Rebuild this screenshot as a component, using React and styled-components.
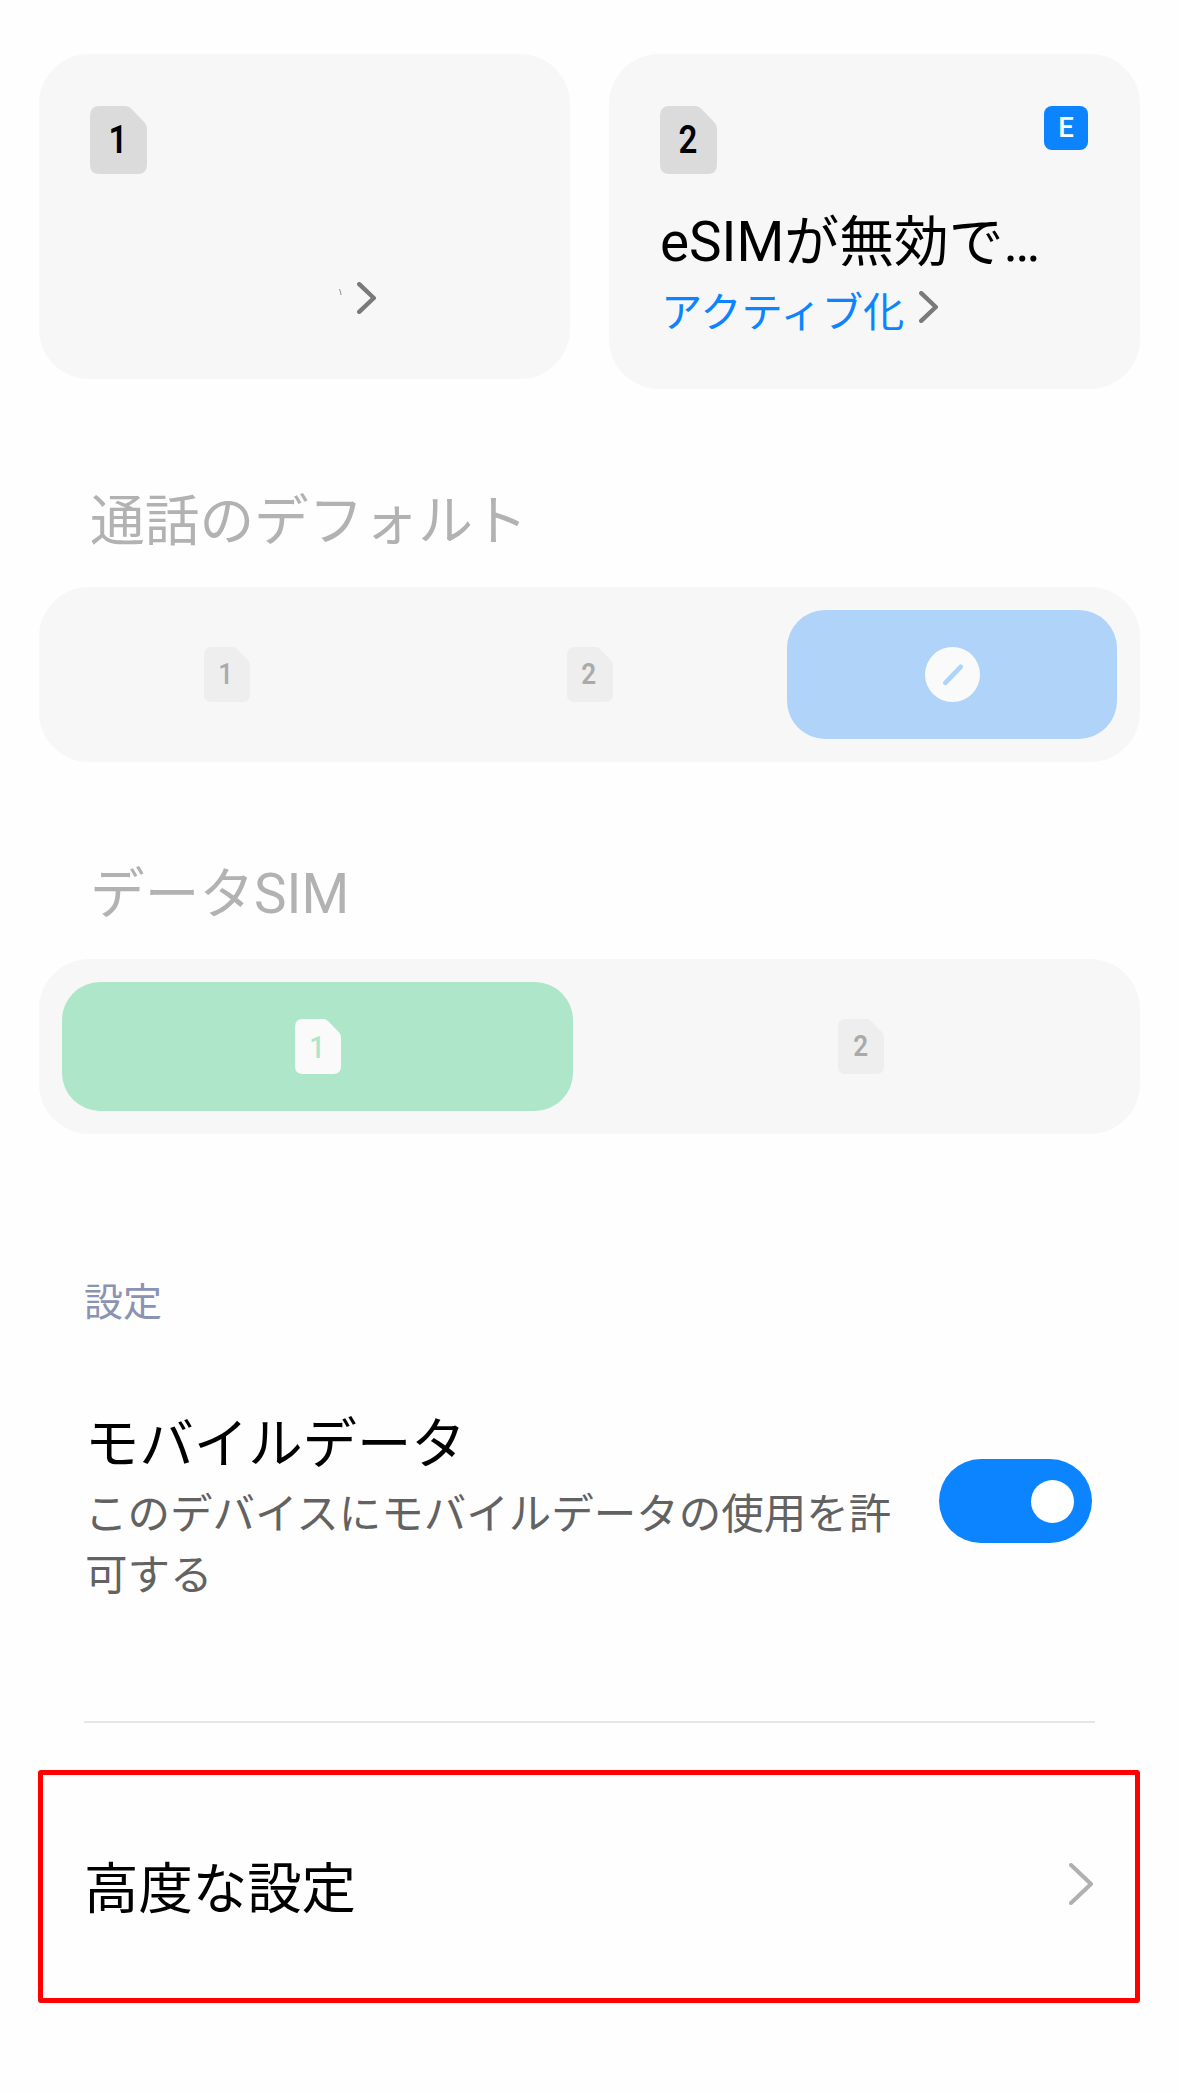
import React from "react";
import styled, { createGlobalStyle } from "styled-components";

const GlobalStyle = createGlobalStyle`
  * { box-sizing: border-box; }
  body {
    margin: 0;
    background: #fefefe;
    color: #000;
    font-family: Roboto, "Noto Sans CJK JP", sans-serif;
  }
`;

const Page = styled.main`
  display: flex;
  flex-direction: column;
  width: 1179px;
  height: 2093px;
  padding: 54px 39px 0;
  overflow: hidden;
`;

const Cards = styled.div`
  display: grid;
  grid-template-columns: 531px 531px;
  gap: 39px;
  align-items: start;
  height: 336px;
`;

const Card = styled.section`
  display: flex;
  flex-direction: column;
  height: ${(p) => p.$height}px;
  padding: 52px 51px 0;
  border-radius: 50px;
  background: #f7f7f7;
`;

const CardTop = styled.div`
  display: flex;
  justify-content: space-between;
  align-items: flex-start;
  height: 68px;
`;

const SimBox = styled.span`
  display: grid;
  width: ${(p) => p.$w}px;
  height: ${(p) => p.$h}px;

  & > * { grid-area: 1 / 1; }
`;

const SimDigit = styled.span`
  place-self: center;
  padding-right: 2px;
  padding-bottom: ${(p) => p.$lift}px;
  color: ${(p) => p.$color};
  font-size: ${(p) => p.$size}px;
  font-weight: ${(p) => p.$weight};
  line-height: 1;
  transform: scaleX(0.87);
`;

const Badge = styled.span`
  display: flex;
  align-items: center;
  justify-content: center;
  width: 44px;
  height: 44px;
  margin-right: 1px;
  border-radius: 8px;
  background: #0d84ff;
  color: #fff;
  font-size: 27.5px;
  font-weight: 500;
  line-height: 44px;
`;

const CardTitle = styled.div`
  margin-top: 36px;
  font-size: 54.8px;
  line-height: 64px;
  white-space: nowrap;
`;

const CardLink = styled.div`
  display: flex;
  align-items: center;
  gap: 15px;
  height: 50px;
  margin-top: 14px;
  padding-left: 1px;
  color: #0d84ff;
  font-size: 41.3px;
  line-height: 50px;

  svg { margin-bottom: 12px; }
`;

const HiddenCarrier = styled.div`
  display: flex;
  align-items: center;
  gap: 15px;
  margin: 108px 0 0 248px;
`;

const GroupTitle = styled.h2`
  height: 64px;
  margin: ${(p) => p.$top}px 0 0 51px;
  color: #b2b2b2;
  font-size: 54.7px;
  font-weight: 400;
  line-height: 64px;
`;

const Segments = styled.div`
  display: grid;
  grid-template-columns: repeat(${(p) => p.$count}, 1fr);
  gap: 32.5px;
  height: 175px;
  margin-top: ${(p) => p.$top}px;
  padding: 23px;
  border-radius: 50px;
  background: #f7f7f7;
`;

const Segment = styled.div`
  display: flex;
  align-items: center;
  justify-content: center;
  border-radius: 38px;
  background: ${(p) => p.$fill || "transparent"};
`;

const Caption = styled.h3`
  margin: 145px 0 0 45px;
  color: #8b93b3;
  font-size: 39px;
  font-weight: 400;
  line-height: 48px;
`;

const Row = styled.div`
  display: flex;
  align-items: center;
  justify-content: space-between;
  height: 220px;
  margin: 86px 48px 0 46px;
`;

const RowText = styled.div`
  display: flex;
  flex-direction: column;
  width: 812px;
  height: 220px;
`;

const RowTitle = styled.div`
  font-size: 54.4px;
  line-height: 64px;
  white-space: nowrap;
`;

const RowNote = styled.div`
  margin-top: 7px;
  color: #626262;
  font-size: 42.5px;
  line-height: 61px;
  word-break: break-all;
`;

const Toggle = styled.span`
  display: flex;
  flex: none;
  align-items: center;
  justify-content: flex-end;
  width: 153px;
  height: 84px;
  margin-bottom: 44px;
  padding-right: 18px;
  border-radius: 42px;
  background: #0c84ff;
`;

const Knob = styled.span`
  width: 43px;
  height: 43px;
  border-radius: 50%;
  background: #fff;
`;

const Divider = styled.hr`
  flex: none;
  width: 1011px;
  height: 2px;
  margin: 88px 0 0 45px;
  border: 0;
  background: #e6e6e6;
`;

const AdvancedRow = styled.div`
  display: flex;
  align-items: center;
  justify-content: space-between;
  width: 1102px;
  height: 233px;
  margin: 47px 0 0 -1px;
  padding: 0 42px 6px 41px;
  border: 5px solid #f00;
  border-radius: 3px;

  ${RowTitle} { padding-top: 13px; }
`;

function Sim({ n, w = 46, h = 55, fill, color, size = 30, weight = 500, lift = 0 }) {
  return (
    <SimBox $w={w} $h={h}>
      <svg width={w} height={h} viewBox="0 0 57 68" preserveAspectRatio="none">
        <path
          fill={fill}
          d="M9.500 0H35q4 0 6.500 3L54.500 16.500Q57 19 57 22.500V58.500Q57 68 47.500 68H9.500Q0 68 0 58.500V9.500Q0 0 9.500 0Z"
        />
      </svg>
      <SimDigit $color={color} $size={size} $weight={weight} $lift={lift}>
        {n}
      </SimDigit>
    </SimBox>
  );
}

function Chevron({ w = 19, h = 32, stroke = 4.4, color = "#7a7a7a" }) {
  const r = stroke / 2;
  return (
    <svg width={w} height={h} fill="none" stroke={color} strokeWidth={stroke} strokeLinecap="round" strokeLinejoin="round">
      <path d={`M${r} ${r}L${w - r} ${h / 2}L${r} ${h - r}`} />
    </svg>
  );
}

export default function App() {
  return (
    <>
      <GlobalStyle />
      <Page lang="ja">
        <Cards>
          <Card $height={325}>
            <CardTop>
              <Sim n="1" w={57} h={68} fill="#dbdbdb" color="#000" size={38} weight={600} lift={1} />
            </CardTop>
            <HiddenCarrier>
              <svg width="4" height="20" fill="none" stroke="#777" strokeWidth="0.8">
                <path d="M1.500 1L2.500 4L3 7" />
              </svg>
              <Chevron />
            </HiddenCarrier>
          </Card>
          <Card $height={335}>
            <CardTop>
              <Sim n="2" w={57} h={68} fill="#dbdbdb" color="#000" size={38} weight={600} lift={1} />
              <Badge>E</Badge>
            </CardTop>
            <CardTitle>eSIMが無効で…</CardTitle>
            <CardLink>
              アクティブ化
              <Chevron />
            </CardLink>
          </Card>
        </Cards>

        <GroupTitle $top={99}>通話のデフォルト</GroupTitle>
        <Segments $count={3} $top={34}>
          <Segment><Sim n="1" fill="#eeeeee" color="#aaaaaa" lift={2} /></Segment>
          <Segment><Sim n="2" fill="#eeeeee" color="#aaaaaa" weight={600} lift={2} /></Segment>
          <Segment $fill="#b0d4f9">
            <svg width="55" height="55" viewBox="0 0 55 55">
              <circle cx="27.500" cy="27.500" r="27.500" fill="#fafafa" />
              <path d="M20.300 35.800L35.700 19.800" stroke="#b0d4f9" strokeWidth="4.800" strokeLinecap="round" />
            </svg>
          </Segment>
        </Segments>

        <GroupTitle $top={100}>データSIM</GroupTitle>
        <Segments $count={2} $top={33}>
          <Segment $fill="#aee6c9"><Sim n="1" fill="#fafafa" color="#aee6c9" size={32} /></Segment>
          <Segment><Sim n="2" fill="#eeeeee" color="#aaaaaa" weight={600} lift={2} /></Segment>
        </Segments>

        <Caption>設定</Caption>
        <Row>
          <RowText>
            <RowTitle>モバイルデータ</RowTitle>
            <RowNote>このデバイスにモバイルデータの使用を許可する</RowNote>
          </RowText>
          <Toggle><Knob /></Toggle>
        </Row>
        <Divider />
        <AdvancedRow>
          <RowTitle>高度な設定</RowTitle>
          <Chevron w={24} h={42} stroke={4} color="#b0b0b0" />
        </AdvancedRow>
      </Page>
    </>
  );
}
